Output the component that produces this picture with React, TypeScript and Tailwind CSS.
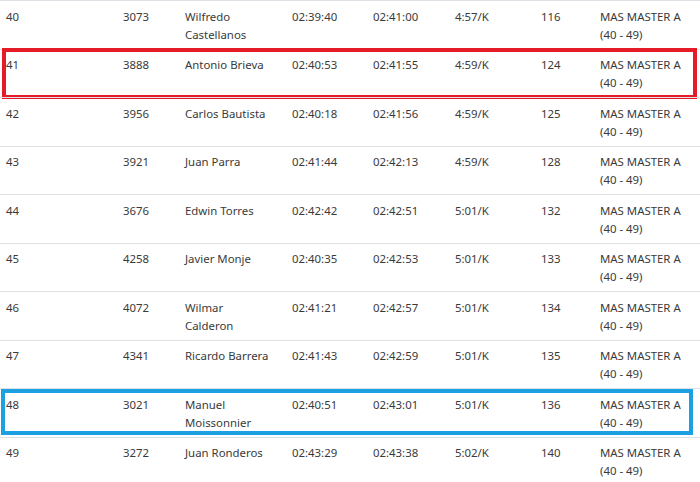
const rows = [
  { pos: "40", bib: "3073", name: "Wilfredo\nCastellanos", gun: "02:39:40", chip: "02:41:00", pace: "4:57/K", cat: "116" },
  { pos: "41", bib: "3888", name: "Antonio Brieva", gun: "02:40:53", chip: "02:41:55", pace: "4:59/K", cat: "124", mark: "red" },
  { pos: "42", bib: "3956", name: "Carlos Bautista", gun: "02:40:18", chip: "02:41:56", pace: "4:59/K", cat: "125" },
  { pos: "43", bib: "3921", name: "Juan Parra", gun: "02:41:44", chip: "02:42:13", pace: "4:59/K", cat: "128" },
  { pos: "44", bib: "3676", name: "Edwin Torres", gun: "02:42:42", chip: "02:42:51", pace: "5:01/K", cat: "132" },
  { pos: "45", bib: "4258", name: "Javier Monje", gun: "02:40:35", chip: "02:42:53", pace: "5:01/K", cat: "133" },
  { pos: "46", bib: "4072", name: "Wilmar\nCalderon", gun: "02:41:21", chip: "02:42:57", pace: "5:01/K", cat: "134" },
  { pos: "47", bib: "4341", name: "Ricardo Barrera", gun: "02:41:43", chip: "02:42:59", pace: "5:01/K", cat: "135" },
  { pos: "48", bib: "3021", name: "Manuel\nMoissonnier", gun: "02:40:51", chip: "02:43:01", pace: "5:01/K", cat: "136", mark: "blue" },
  { pos: "49", bib: "3272", name: "Juan Ronderos", gun: "02:43:29", chip: "02:43:38", pace: "5:02/K", cat: "140" },
];

const Cell = ({ children, className = "" }: { children: React.ReactNode; className?: string }) => (
  <div className={`pt-[6.5px] pb-[5px] pl-[6px] pr-[4px] whitespace-pre-line ${className}`}>{children}</div>
);

export default function App() {
  return (
    <div
      className="w-[700px] h-[482px] overflow-hidden bg-white text-[11.4px] leading-[18px] text-[#3a3a3a]"
      style={{ fontFamily: '"Noto Sans", "Open Sans", sans-serif' }}
    >
      {rows.map((r) => (
        <div
          key={r.pos}
          className="relative grid grid-cols-[117px_62px_107px_81px_82px_86px_59px_106px] border-t border-[#dee2e6]"
        >
          <Cell className="pl-[3px]">{r.pos}</Cell>
          <Cell>{r.bib}</Cell>
          <Cell>{r.name}</Cell>
          <Cell>{r.gun}</Cell>
          <Cell>{r.chip}</Cell>
          <Cell>{r.pace}</Cell>
          <Cell>{r.cat}</Cell>
          <Cell>{"MAS MASTER A\n(40 - 49)"}</Cell>
          {r.mark === "red" && (
            <div className="absolute left-[2px] top-[-2px] w-[695px] h-[51px] border-[4px] border-[#e51c28] pointer-events-none" />
          )}
          {r.mark === "blue" && (
            <div className="absolute left-[1px] top-[0px] w-[692px] h-[46px] border-[4px] border-[#1ba1e2] pointer-events-none" />
          )}
        </div>
      ))}
    </div>
  );
}
